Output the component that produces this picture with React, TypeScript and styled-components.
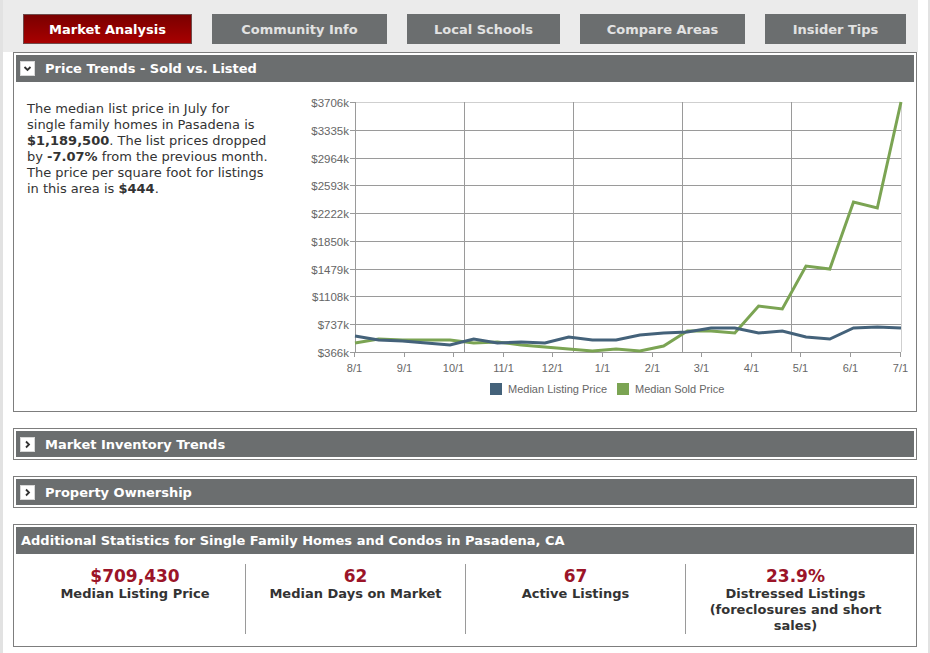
import React from 'react';
import styled, { createGlobalStyle } from 'styled-components';

const GlobalStyle = createGlobalStyle`
  html, body {
    margin: 0;
    padding: 0;
    background: #e2e2e2;
  }
  body {
    font-family: 'DejaVu Sans', Verdana, sans-serif;
  }
`;

const tabs = ['Market Analysis', 'Community Info', 'Local Schools', 'Compare Areas', 'Insider Tips'];
const tabWidths = [169, 175, 153, 165, 141];

const yLabels = ['$3706k', '$3335k', '$2964k', '$2593k', '$2222k', '$1850k', '$1479k', '$1108k', '$737k', '$366k'];
const xLabels = ['8/1', '9/1', '10/1', '11/1', '12/1', '1/1', '2/1', '3/1', '4/1', '5/1', '6/1', '7/1'];

// page pixel values, shifted into the svg box below
const listing = [336, 340, 341, 343, 345, 339, 343, 342, 343, 337, 340, 340, 335, 333, 332, 328, 328, 333, 331, 337, 339, 328, 327, 328];
const sold = [343, 339, 340, 340, 340, 343, 342, 345, 347, 349, 351, 349, 351, 346, 331, 331, 333, 306, 309, 266, 269, 202, 208, 102];

const stats = [
  { value: '$709,430', label: 'Median Listing Price' },
  { value: '62', label: 'Median Days on Market' },
  { value: '67', label: 'Active Listings' },
  { value: '23.9%', label: 'Distressed Listings (foreclosures and short sales)' },
];

const OX = 295;
const OY = 95;
const LEFT = 355 - OX;
const RIGHT = 901 - OX;
const TOP = 102 - OY;
const BOTTOM = 352 - OY;

const Wrapper = styled.div`
  margin-left: 3px;
  width: 925px;
  min-height: 100vh;
  background: #ffffff;
`;

const TabBar = styled.div`
  width: 915px;
  height: 52px;
  box-sizing: border-box;
  padding: 14px 0 0 20px;
  background: #ebebeb;
  display: flex;
  gap: 20px;
`;

const Tab = styled.div<{ $active?: boolean }>`
  flex-shrink: 0;
  height: 30px;
  box-sizing: border-box;
  display: flex;
  align-items: center;
  justify-content: center;
  font-size: 13px;
  font-weight: bold;
  color: ${(p) => (p.$active ? '#ffffff' : '#e2e2e2')};
  background: ${(p) => (p.$active ? 'linear-gradient(#7a0000, #a80000)' : '#6b6e6f')};
  border: 1px solid ${(p) => (p.$active ? '#6e4a4a' : '#6b6e6f')};
`;

const Content = styled.div`
  padding-left: 10px;
  width: 904px;
  display: flex;
  flex-direction: column;
  gap: 16px;
`;

const Panel = styled.section`
  border: 1px solid #7d7d7d;
  padding: 2px;
  background: #ffffff;
`;

const PanelHeader = styled.div<{ $tall?: boolean }>`
  height: ${(p) => (p.$tall ? '27px' : '26px')};
  background: #6b6e6f;
  display: flex;
  align-items: center;
  padding-left: 4px;
  gap: 10px;
`;

const StatsHeader = styled(PanelHeader)`
  padding-left: 5px;
`;

const Toggle = styled.span`
  width: 15px;
  height: 15px;
  box-sizing: border-box;
  background: #ffffff;
  border: 1px solid #d8d8d8;
  display: flex;
  align-items: center;
  justify-content: center;
`;

const PanelTitle = styled.h3`
  margin: 0;
  font-size: 13px;
  font-weight: bold;
  color: #ffffff;
`;

const PanelBody = styled.div`
  display: flex;
  padding: 13px 0 9px;
`;

const Summary = styled.p`
  margin: 0;
  padding: 6px 0 0 11px;
  width: 279px;
  flex-shrink: 0;
  box-sizing: border-box;
  font-size: 13px;
  line-height: 16px;
  color: #333333;
  white-space: nowrap;
  b {
    font-weight: bold;
  }
`;

const ChartSvg = styled.svg`
  display: block;
  flex-shrink: 0;
  font-family: 'Liberation Sans', Arial, sans-serif;
`;

const StatsBody = styled.div`
  display: flex;
  padding: 10px 9px;
`;

const StatCol = styled.div<{ $first?: boolean }>`
  width: 220px;
  height: 70px;
  box-sizing: border-box;
  padding: 2px 14px 0;
  border-left: ${(p) => (p.$first ? 'none' : '1px solid #9a9a9a')};
  text-align: center;
`;

const StatValue = styled.div`
  font-size: 17px;
  line-height: 20px;
  font-weight: bold;
  color: #9b1428;
`;

const StatLabel = styled.div`
  font-size: 13px;
  line-height: 16px;
  font-weight: bold;
  color: #333333;
`;

const Chevron = ({ open }: { open: boolean }) => (
  <svg width="11" height="11" viewBox="0 0 11 11">
    <path
      d={open ? 'M2.5 4 L5.5 7 L8.5 4' : 'M4 2.5 L7 5.5 L4 8.5'}
      fill="none"
      stroke="#333"
      strokeWidth="1.8"
    />
  </svg>
);

const points = (data: number[]) =>
  data.map((y, i) => `${(LEFT + (i * (RIGHT - LEFT)) / (data.length - 1)).toFixed(1)},${y - OY}`).join(' ');

const PriceChart = () => {
  const yStep = (BOTTOM - TOP) / (yLabels.length - 1);
  const xStep = (899.6 - 354) / (xLabels.length - 1);
  return (
    <ChartSvg width="618" height="305" viewBox="0 0 618 305">
      <line x1={LEFT} y1={TOP + 0.5} x2={RIGHT} y2={TOP + 0.5} stroke="#cfcfcf" />
      <line x1={RIGHT + 0.5} y1={TOP} x2={RIGHT + 0.5} y2={BOTTOM} stroke="#cfcfcf" />
      {yLabels.map((label, i) => {
        const y = Math.round(TOP + i * yStep) + 0.5;
        return (
          <g key={label}>
            {i > 0 && <line x1={LEFT} y1={y} x2={RIGHT} y2={y} stroke="#9a9a9a" />}
            <line x1={LEFT - 5} y1={y} x2={LEFT} y2={y} stroke="#9a9a9a" />
            <text x={LEFT - 6} y={y + 4} fontSize="11.5" fill="#666" textAnchor="end">
              {label}
            </text>
          </g>
        );
      })}
      {[464, 573, 682, 791].map((x) => (
        <line key={x} x1={x - OX + 0.5} y1={TOP} x2={x - OX + 0.5} y2={BOTTOM} stroke="#9a9a9a" />
      ))}
      <line x1={LEFT + 0.5} y1={TOP} x2={LEFT + 0.5} y2={BOTTOM} stroke="#9a9a9a" />
      {xLabels.map((label, i) => {
        const x = Math.round(354 - OX + i * xStep) + 0.5;
        return (
          <g key={label}>
            <line x1={x} y1={BOTTOM} x2={x} y2={BOTTOM + 5} stroke="#9a9a9a" />
            <text x={x} y={BOTTOM + 20} fontSize="11" fill="#666" textAnchor="middle">
              {label}
            </text>
          </g>
        );
      })}
      <polyline points={points(sold)} fill="none" stroke="#7ba453" strokeWidth="3" strokeLinejoin="miter" />
      <polyline points={points(listing)} fill="none" stroke="#44627a" strokeWidth="3" strokeLinejoin="miter" />
      <rect x={490 - OX} y={383 - OY} width="12" height="12" fill="#44627a" />
      <text x={508 - OX} y={393 - OY} fontSize="11" fill="#666">
        Median Listing Price
      </text>
      <rect x={617 - OX} y={383 - OY} width="12" height="12" fill="#7ba453" />
      <text x={635 - OX} y={393 - OY} fontSize="11" fill="#666">
        Median Sold Price
      </text>
    </ChartSvg>
  );
};

const CollapsedPanel = ({ title }: { title: string }) => (
  <Panel>
    <PanelHeader>
      <Toggle>
        <Chevron open={false} />
      </Toggle>
      <PanelTitle>{title}</PanelTitle>
    </PanelHeader>
  </Panel>
);

export default function App() {
  return (
    <Wrapper>
      <GlobalStyle />
      <TabBar>
        {tabs.map((t, i) => (
          <Tab key={t} $active={i === 0} style={{ width: tabWidths[i] }}>
            {t}
          </Tab>
        ))}
      </TabBar>
      <Content>
        <Panel>
          <PanelHeader $tall>
            <Toggle>
              <Chevron open />
            </Toggle>
            <PanelTitle>Price Trends - Sold vs. Listed</PanelTitle>
          </PanelHeader>
          <PanelBody>
            <Summary>
              The median list price in July for
              <br />
              single family homes in Pasadena is
              <br />
              <b>$1,189,500</b>. The list prices dropped
              <br />
              by <b>-7.07%</b> from the previous month.
              <br />
              The price per square foot for listings
              <br />
              in this area is <b>$444</b>.
            </Summary>
            <PriceChart />
          </PanelBody>
        </Panel>
        <CollapsedPanel title="Market Inventory Trends" />
        <CollapsedPanel title="Property Ownership" />
        <Panel>
          <StatsHeader $tall>
            <PanelTitle>Additional Statistics for Single Family Homes and Condos in Pasadena, CA</PanelTitle>
          </StatsHeader>
          <StatsBody>
            {stats.map((s, i) => (
              <StatCol key={s.label} $first={i === 0}>
                <StatValue>{s.value}</StatValue>
                <StatLabel>{s.label}</StatLabel>
              </StatCol>
            ))}
          </StatsBody>
        </Panel>
      </Content>
    </Wrapper>
  );
}
